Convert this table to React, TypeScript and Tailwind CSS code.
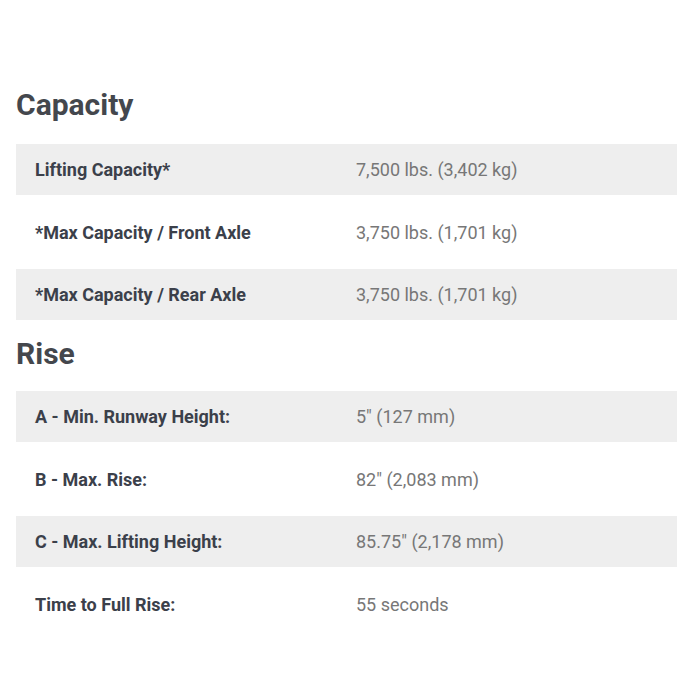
const capacity = [
  { label: "Lifting Capacity*", value: "7,500 lbs. (3,402 kg)" },
  { label: "*Max Capacity / Front Axle", value: "3,750 lbs. (1,701 kg)" },
  { label: "*Max Capacity / Rear Axle", value: "3,750 lbs. (1,701 kg)" },
];

const rise = [
  { label: "A - Min. Runway Height:", value: "5\" (127 mm)" },
  { label: "B - Max. Rise:", value: "82\" (2,083 mm)" },
  { label: "C - Max. Lifting Height:", value: "85.75\" (2,178 mm)" },
  { label: "Time to Full Rise:", value: "55 seconds" },
];

function SpecTable({ rows }: { rows: { label: string; value: string }[] }) {
  return (
    <div className="flex flex-col gap-[11.5px]">
      {rows.map((row, i) => (
        <div
          key={row.label}
          className={`grid grid-cols-[340px_1fr] items-center h-[51px] ${i % 2 === 0 ? "bg-[#eeeeee]" : ""}`}
        >
          <div className="pl-[19px] text-[18px] font-bold text-[#3b404a]">{row.label}</div>
          <div className="text-[18px] text-[#777777]">{row.value}</div>
        </div>
      ))}
    </div>
  );
}

export default function App() {
  return (
    <div className="w-[700px] h-[700px] bg-white pl-4 pr-[23px] pt-[85px] font-['Roboto',sans-serif]">
      <h2 className="text-[30px] leading-[40px] font-bold text-[#44474d] mb-[19px]">Capacity</h2>
      <SpecTable rows={capacity} />
      <h2 className="text-[30px] leading-[40px] font-bold text-[#44474d] mt-[14px] mb-[17px]">Rise</h2>
      <SpecTable rows={rise} />
    </div>
  );
}
